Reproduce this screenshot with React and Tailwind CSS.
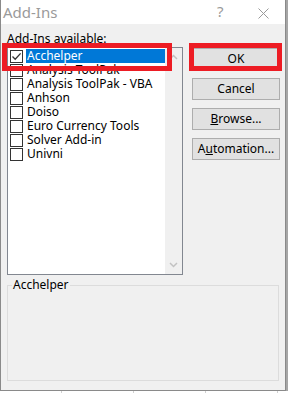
import React from "react";

const items = [
  "Acchelper",
  "Analysis ToolPak",
  "Analysis ToolPak - VBA",
  "Anhson",
  "Doiso",
  "Euro Currency Tools",
  "Solver Add-in",
  "Univni",
];

function Check() {
  return (
    <svg width="11" height="11" viewBox="0 0 11 11" className="block">
      <path d="M1.5 5.5 L4.2 8.3 L9.6 2.4" fill="none" stroke="#333" strokeWidth="1.3" />
    </svg>
  );
}

function Btn({ children }) {
  return (
    <div className="h-[22px] w-[88px] bg-[#e1e1e1] border border-[#adadad] flex items-center justify-center text-[12px] text-black leading-none">
      {children}
    </div>
  );
}

export default function App() {
  return (
    <div
      className="w-[288px] h-[393px] bg-white relative overflow-hidden flex"
      style={{ fontFamily: '"Noto Sans", "Open Sans", sans-serif' }}
    >
      <div className="w-[286px] h-[391px] border-l border-r border-b border-[#8a8a8a] flex flex-col shrink-0">
        {/* title bar */}
        <div className="h-[24px] bg-white flex items-center relative shrink-0">
          <span className="ml-[2px] text-[15px] text-[#9a9a9a] leading-none">Add-Ins</span>
          <span className="absolute left-[216px] top-[4px] text-[15px] text-[#9a9a9a] leading-none">?</span>
          <svg className="absolute left-[257px] top-[8px]" width="11" height="11" viewBox="0 0 11 11">
            <path d="M0.5 0.5 L10.5 10.5 M10.5 0.5 L0.5 10.5" stroke="#9a9a9a" strokeWidth="1" />
          </svg>
        </div>
        {/* body */}
        <div className="flex-1 bg-[#f0f0f0] relative">
          <div className="flex pl-[6px] pt-[7px]">
            <div className="flex flex-col w-[176px]">
              <div className="text-[12px] leading-[15px] text-black h-[16px]">Add-Ins available:</div>
              <div className="h-[228px] bg-white border border-[#828790] flex">
                <div className="flex-1 pt-[1px] flex flex-col">
                  {items.map((it, i) => (
                    <div key={it} className="h-[14px] flex items-center">
                      <div className="ml-[2px] w-[13px] h-[13px] border border-[#333] bg-white flex items-center justify-center shrink-0">
                        {i === 0 && <Check />}
                      </div>
                      <div
                        className={
                          "ml-[3px] h-[14px] flex-1 pl-[1px] flex items-center text-[12px] leading-[14px] " +
                          (i === 0 ? "bg-[#0078d7] text-white" : "text-black")
                        }
                      >
                        <span className="leading-[14px] h-[14px] block">{it}</span>
                      </div>
                    </div>
                  ))}
                </div>
                <div className="w-[17px] bg-[#f0f0f0] flex flex-col justify-between items-center py-[6px]">
                  <svg width="9" height="6" viewBox="0 0 9 6">
                    <path d="M1 5 L4.5 1.5 L8 5" fill="none" stroke="#c2c2c2" strokeWidth="1.5" />
                  </svg>
                  <svg width="9" height="6" viewBox="0 0 9 6">
                    <path d="M1 1 L4.5 4.5 L8 1" fill="none" stroke="#c2c2c2" strokeWidth="1.5" />
                  </svg>
                </div>
              </div>
            </div>
            <div className="ml-[9px] pt-[17px] flex flex-col gap-[8px]">
              <Btn>OK</Btn>
              <Btn>Cancel</Btn>
              <Btn>
                <span className="underline">B</span>rowse...
              </Btn>
              <Btn>
                A<span className="underline">u</span>tomation...
              </Btn>
            </div>
          </div>
          {/* group box */}
          <fieldset className="mx-[6px] mt-[3px] h-[103px] border border-[#dcdcdc] px-[4px]">
            <legend className="text-[12px] leading-[14px] text-black px-[1px]">Acchelper</legend>
          </fieldset>

          {/* red annotation frames */}
          <div className="absolute left-[1px] top-[19px] w-[170px] h-[28px] border-[5px] border-[#ed1c24]" />
          <div className="absolute left-[188px] top-[19px] w-[93px] h-[28px] border-[5px] border-[#ed1c24]" />
        </div>
      </div>
      <div className="w-[2px] h-[391px] bg-[#a6a6a6]" />
      {/* gridline ticks below */}
      <div className="absolute left-[61px] top-[391px] w-px h-[2px] bg-[#d0d0d0]" />
      <div className="absolute left-[133px] top-[391px] w-px h-[2px] bg-[#d0d0d0]" />
      <div className="absolute left-[205px] top-[391px] w-px h-[2px] bg-[#d0d0d0]" />
      <div className="absolute left-[277px] top-[391px] w-px h-[2px] bg-[#d0d0d0]" />
    </div>
  );
}
